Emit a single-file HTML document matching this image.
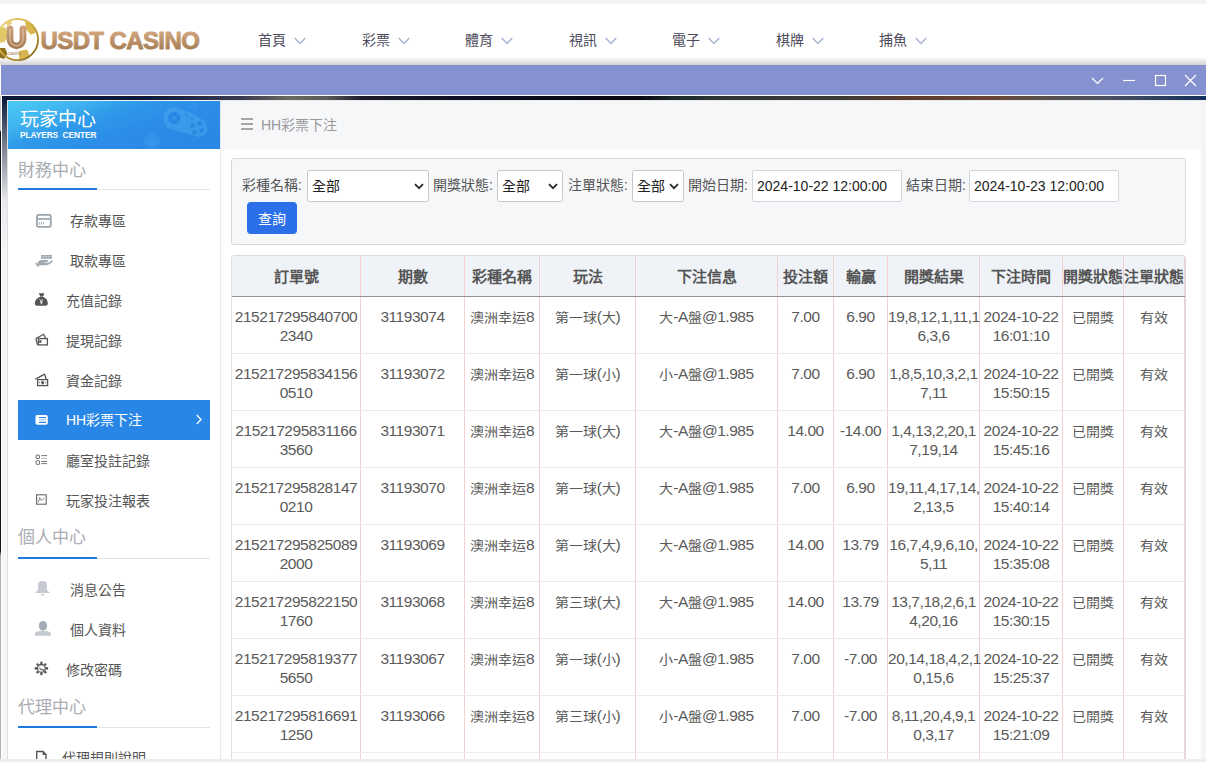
<!DOCTYPE html>
<html lang="zh-TW"><head><meta charset="utf-8">
<style>
*{box-sizing:border-box;margin:0;padding:0}
html,body{width:1206px;height:762px;overflow:hidden;background:#fff;font-family:"Liberation Sans",sans-serif;}
.abs{position:absolute}
#topstrip{left:0;top:0;width:1206px;height:4px;background:#f3f3f3}
#hdrshadow{left:0;top:57px;width:1206px;height:8px;background:linear-gradient(#fff,#d2d2d2)}

.nav{top:30px;height:20px;font-size:14px;line-height:20px;color:#4d4a5c;white-space:nowrap}
.nav svg{position:absolute;left:36px;top:7px}
#winbar{left:1px;top:65px;width:1205px;height:30px;background:#8691cf}
#winline{left:1px;top:95px;width:1205px;height:1px;background:#fff}
#band{left:1px;top:96px;width:1205px;height:4px;background:linear-gradient(90deg,#0a1838 0%,#0f1a3a 12%,#3a3a50 20%,#6a6a60 24%,#5a5a58 27%,#1c1c2c 30%,#0a0c20 40%,#080810 53%,#1a2a2a 56%,#2f3634 60%,#3d3a36 70%,#5a3a2c 75%,#6a4432 82%,#5a5048 86%,#4a5060 92%,#12305a 100%)}
#leftedge{left:0;top:96px;width:1px;height:666px;background:linear-gradient(#c8c8c8 0px,#c8c8c8 34px,#101018 36px,#1a1020 455px,#b0b0b0 460px,#b0b0b0 100%)}
#leftwhite{left:1px;top:95px;width:1px;height:667px;background:#fff}
#leftpad{left:2px;top:96px;width:5px;height:666px;background:linear-gradient(#0a1634 0px,#1a2a48 10px,#7a8090 50px,#9096a4 62px,#e8e9ec 105px,#f6f6f6 160px,#f6f6f6 100%)}
#sidebar{left:7px;top:100px;width:214px;height:662px;background:#fff;border-left:1px solid #e0e0e0;border-right:1px solid #e6e9ee;border-top:1px solid #f2f2f2}
#pc{left:8px;top:101px;width:212px;height:48px;background:linear-gradient(160deg,#4ccbf3 0%,#3fb4ef 22%,#2f9aea 38%,#2b8de7 60%,#2a86e4 100%);overflow:hidden}
#pc .t1{position:absolute;left:12px;top:8px;font-size:19px;line-height:22px;color:#fff}
#pc .t2{position:absolute;left:12px;top:29px;font-size:8.4px;line-height:10px;color:#fff;letter-spacing:-0.1px;font-weight:bold}
.sect{left:18px;font-size:17px;line-height:20px;color:#a9adb3}
.sline{left:18px;width:192px;height:1px;background:#e2e2e2}
.sblue{left:18px;width:79px;height:2px;background:#1f7ae0}
.item{left:18px;width:192px;height:40px;font-size:14px;line-height:40px;color:#555}
.item .ic{position:absolute;left:17px;top:0;height:40px;display:flex;align-items:center}
.item .ics{position:absolute;left:0;top:0}
.item .tx{position:absolute;left:48px;top:1px}
.item.act{background:#2887e6;color:#fff}
.item.act .tx{top:0}
#main{left:221px;top:100px;width:980px;height:662px;background:#fff}
#mainhdr{left:221px;top:100px;width:980px;height:49px;background:#f6f7f9;border-top:1px solid #e8e8e8}
#rightpad{left:1201px;top:100px;width:5px;height:662px;background:#f4f4f4}
#bottomstrip{left:0;top:759px;width:1206px;height:3px;background:#eeeeee}
#crumb{left:241px;top:115px;font-size:14px;line-height:20px;color:#999}
#filter{left:231px;top:158px;width:955px;height:87px;background:#f6f7f9;border:1px solid #d2d9de;border-radius:3px}
.lbl{top:175px;font-size:14px;line-height:20px;color:#555}
.sel{top:170px;height:32px;background:#fff;border:1px solid #c6c7c9;border-radius:2.5px;font-size:14px;line-height:30px;color:#222;padding-left:4px}
.sel svg{position:absolute;right:4px;top:12px}
.inp{top:170px;height:32px;background:#fff;border:1px solid #d3d6da;border-radius:2px;font-size:14px;line-height:30px;color:#222;padding-left:4px}
#btn{left:247px;top:202px;width:50px;height:32px;background:#2b70e8;border-radius:4px;color:#fff;font-size:14px;line-height:34px;text-align:center}
#tbl{left:231px;top:255px;width:955px;height:507px;border-left:1px solid #dcdfe3;border-right:1px solid #d6dce2;border-top:1px solid #d8dce0;border-top-left-radius:4px;border-top-right-radius:4px;overflow:hidden}
.row{position:absolute;left:0;display:flex}
.c{border-right:1px solid #f5cfd2;text-align:center;flex:none;overflow:visible;white-space:nowrap}
.hd{top:0;height:41px;background:#eff3f7;border-bottom:1px solid #9b8f91}
.hd .c{height:40px;font-size:15px;line-height:42px;font-weight:bold;color:#555}
.br{height:57px;border-bottom:1px solid #ebebeb}
.br .c{height:56px;font-size:15.5px;line-height:19px;color:#5a5a5a;padding-top:10px;letter-spacing:-0.45px}
.k{font-size:14px;letter-spacing:0;display:inline-block;transform:scaleY(0.93);transform-origin:50% 70%}
</style></head><body>
<div id="topstrip" class="abs"></div>
<div id="hdrshadow" class="abs"></div>
<svg id="logo" class="abs" style="left:0;top:0" width="210" height="64" viewBox="0 0 210 64">
  <defs>
    <linearGradient id="gold" x1="0" y1="0" x2="1" y2="1"><stop offset="0" stop-color="#f0d77a"/><stop offset="0.45" stop-color="#d4b04a"/><stop offset="1" stop-color="#7a5a10"/></linearGradient>
    <linearGradient id="ug" gradientUnits="userSpaceOnUse" x1="0" y1="25" x2="0" y2="49"><stop offset="0" stop-color="#d0a47c"/><stop offset="1" stop-color="#a57a52"/></linearGradient>
    <linearGradient id="tg" x1="0" y1="0" x2="0" y2="1"><stop offset="0" stop-color="#dcb088"/><stop offset="1" stop-color="#9c754c"/></linearGradient>
  </defs>
  <circle cx="17.5" cy="39.6" r="21.2" fill="#fff"/>
  <path d="M25 21.5 L33 24 L36.5 32 L31 35 L26 29Z" fill="#d9b84e"/>
  <path d="M-2 28 L5 27 L8.5 35 L4.5 42 L-2 43Z" fill="#e2c766"/>
  <path d="M-2 48 L5 48 L7.5 54 L4 59 L-2 57Z" fill="#8f701c"/>
  <path d="M19 51 L27 49.5 L29.5 55 L25 59.5 L19 59Z" fill="#d6b450"/>
  <path d="M6 22 L11 20 L12 24 L7 26Z" fill="#e6cf7a"/>
  <circle cx="17.5" cy="39.6" r="20.6" fill="none" stroke="url(#gold)" stroke-width="1.8"/>
  <path d="M10 29 V39.3 A6.5 6.5 0 0 0 23 39.3 V29" fill="none" stroke="url(#ug)" stroke-width="6.8" stroke-linecap="round"/>
  <path d="M10 29.5 V39.3 A6.5 6.5 0 0 0 23 39.3 V29.5" fill="none" stroke="#fff" stroke-width="0.7" stroke-linecap="round" opacity="0.75"/>
  <text x="8" y="54.5" font-family="Liberation Sans" font-size="4.5" fill="#a07a50">casino</text>
  <text x="40.5" y="49" font-family="Liberation Sans" font-weight="bold" font-size="24" letter-spacing="-0.6" fill="url(#tg)" stroke="url(#tg)" stroke-width="0.9" stroke-linejoin="round">USDT CASINO</text>
</svg>

<div class="abs nav" style="left:258px">首頁<svg width="12" height="8" viewBox="0 0 12 8"><path d="M0.7 1 L6 6.5 L11.3 1" fill="none" stroke="#a8b2d2" stroke-width="1.5"/></svg></div>
<div class="abs nav" style="left:362px">彩票<svg width="12" height="8" viewBox="0 0 12 8"><path d="M0.7 1 L6 6.5 L11.3 1" fill="none" stroke="#a8b2d2" stroke-width="1.5"/></svg></div>
<div class="abs nav" style="left:465px">體育<svg width="12" height="8" viewBox="0 0 12 8"><path d="M0.7 1 L6 6.5 L11.3 1" fill="none" stroke="#a8b2d2" stroke-width="1.5"/></svg></div>
<div class="abs nav" style="left:569px">視訊<svg width="12" height="8" viewBox="0 0 12 8"><path d="M0.7 1 L6 6.5 L11.3 1" fill="none" stroke="#a8b2d2" stroke-width="1.5"/></svg></div>
<div class="abs nav" style="left:672px">電子<svg width="12" height="8" viewBox="0 0 12 8"><path d="M0.7 1 L6 6.5 L11.3 1" fill="none" stroke="#a8b2d2" stroke-width="1.5"/></svg></div>
<div class="abs nav" style="left:776px">棋牌<svg width="12" height="8" viewBox="0 0 12 8"><path d="M0.7 1 L6 6.5 L11.3 1" fill="none" stroke="#a8b2d2" stroke-width="1.5"/></svg></div>
<div class="abs nav" style="left:879px">捕魚<svg width="12" height="8" viewBox="0 0 12 8"><path d="M0.7 1 L6 6.5 L11.3 1" fill="none" stroke="#a8b2d2" stroke-width="1.5"/></svg></div>

<div id="winbar" class="abs"></div>
<svg class="abs" style="left:1080px;top:65px" width="126" height="30" viewBox="0 0 126 30">
  <path d="M12 13 L17.5 18.5 L23 13" fill="none" stroke="#fff" stroke-width="1.2"/>
  <path d="M43 15.5 H55" stroke="#fff" stroke-width="1.2"/>
  <rect x="75.5" y="10.5" width="10" height="10" fill="none" stroke="#fff" stroke-width="1.2"/>
  <path d="M105 10 L116 21 M116 10 L105 21" stroke="#fff" stroke-width="1.2"/>
</svg>
<div id="winline" class="abs"></div>
<div id="band" class="abs"></div>
<div id="leftedge" class="abs"></div>
<div id="leftpad" class="abs"></div><div id="leftwhite" class="abs"></div>
<div id="rightpad" class="abs"></div>

<div id="sidebar" class="abs"></div>
<div id="pc" class="abs">
  <svg style="position:absolute;left:124px;top:-1px" width="88" height="49" viewBox="0 0 88 49">
    <g fill="#48a6ee" opacity="0.55">
      <circle cx="42.5" cy="18" r="11"/>
      <circle cx="67" cy="28.5" r="8.5"/>
      <path d="M38 7.5 L58 12 L74 22 L71 36 L60 35 L35 28Z"/>
    </g>
    <circle cx="42.2" cy="18" r="6" fill="#1f7ee0" opacity="0.75"/>
    <path d="M39 15 L45.4 21 M45.4 15 L39 21" stroke="#3d9cec" stroke-width="1.2" opacity="0.7"/>
    <path d="M53 14 L56 15.8 M58 17.5 L61 19.3" stroke="#1f7ee0" stroke-width="1.5" opacity="0.7"/>
    <g fill="#1f7ee0" opacity="0.7"><circle cx="60.5" cy="25.5" r="2.2"/><circle cx="68" cy="23.5" r="2.2"/><circle cx="62.5" cy="32.5" r="2.2"/><circle cx="69.5" cy="30.5" r="2.2"/></g>
    <path d="M58 9 C58 6 61 7 63 8 C65 7 64 5 62 2" fill="none" stroke="#48a6ee" stroke-width="1" opacity="0.6"/>
    <circle cx="20" cy="41" r="8.5" fill="#45a2ec" opacity="0.25"/>
    <circle cx="20" cy="42" r="4.5" fill="#45a2ec" opacity="0.3"/>
  </svg>
  <div class="t1">玩家中心</div>
  <div class="t2">PLAYERS&nbsp;&nbsp;CENTER</div>
</div>

<div class="abs sect" style="top:160.5px">財務中心</div>
<div class="abs sline" style="top:189px"></div>
<div class="abs sblue" style="top:188px"></div>

<div class="abs item" style="top:200px"><svg class="ics" width="40" height="40" viewBox="0 0 40 40"><rect x="19" y="14.9" width="13.8" height="12" rx="1.6" fill="none" stroke="#9aa4ad" stroke-width="1.8"/><path d="M19 18.9 H32.8" stroke="#9aa4ad" stroke-width="1.7"/><path d="M21.4 22.2 V24.6 M23.4 22.2 V24.6 M25.5 22.2 V24.6" stroke="#9aa4ad" stroke-width="0.9"/></svg><span class="tx" style="left:52px">存款專區</span></div>
<div class="abs item" style="top:240px"><svg class="ics" width="40" height="40" viewBox="0 0 40 40"><rect x="23" y="15" width="11" height="3.8" fill="#a0aab3"/><path d="M23.5 16.6 H33.5" stroke="#c0c7cd" stroke-width="0.9"/><path d="M17.2 23.6 L18.6 22.6 L21.2 26 L19.8 27Z" fill="#a0aab3"/><path d="M19.5 22.6 C20.5 21 22 20.1 24 20.1 L29.3 20.1 C30.4 20.3 30.3 21.9 29.2 22.1 L25.8 22.3 C27 23 29 23 31 22.6 L34 20.3 C34.9 19.9 35.3 20.9 34.7 21.6 C32.5 24.2 30.2 25.2 27 25.2 L22.6 25.2 C21.6 25.2 21 25.6 20.6 25.9Z" fill="#a0aab3"/></svg><span class="tx" style="left:52px">取款專區</span></div>
<div class="abs item" style="top:280px"><svg class="ics" width="40" height="40" viewBox="0 0 40 40"><path d="M20.8 13.2 L26.5 13.2 L25 16.6 L22.2 16.6Z" fill="#555"/><path d="M22.2 16.8 C18.6 18 16.8 20.8 16.8 23.6 C16.8 25.1 17.6 25.7 19.2 25.7 L27.4 25.7 C29 25.7 29.8 25.1 29.8 23.6 C29.8 20.8 28.4 18 24.9 16.8Z" fill="#555"/><path d="M21.7 19.3 L23.3 21.4 L24.9 19.3 M23.3 21.4 V24.2 M21.9 22.2 H24.7" fill="none" stroke="#fff" stroke-width="0.9"/></svg><span class="tx">充值記錄</span></div>
<div class="abs item" style="top:320px"><svg class="ics" width="40" height="40" viewBox="0 0 40 40"><path d="M17.8 18.6 L25.6 14.3 L27.6 18.2" fill="none" stroke="#555" stroke-width="1.3"/><path d="M17.8 18.6 L19.6 25" fill="none" stroke="#555" stroke-width="1.2"/><rect x="20.4" y="18.6" width="9" height="6.3" fill="none" stroke="#555" stroke-width="1.3"/><rect x="21.2" y="20.2" width="2.2" height="2.6" fill="#555"/></svg><span class="tx">提現記錄</span></div>
<div class="abs item" style="top:360px"><svg class="ics" width="40" height="40" viewBox="0 0 40 40"><path d="M17.2 19.2 L26.5 14.1 L28.2 19" fill="none" stroke="#555" stroke-width="1.3"/><path d="M19.5 18 L25 15.2" stroke="#555" stroke-width="0.9"/><rect x="19.6" y="19.6" width="10" height="6" fill="none" stroke="#555" stroke-width="1.3"/><ellipse cx="24.6" cy="22.6" rx="1.4" ry="1.9" fill="#555"/><circle cx="21.6" cy="22.6" r="0.6" fill="#555"/><circle cx="27.6" cy="22.6" r="0.6" fill="#555"/></svg><span class="tx">資金記錄</span></div>
<div class="abs item act" style="top:400px"><svg class="ics" width="40" height="40" viewBox="0 0 40 40"><rect x="17.5" y="15" width="12.3" height="9.8" rx="1.8" fill="#fff"/><path d="M21 17.5 H28 M21 22.4 H28" stroke="#2a85e4" stroke-width="1.1"/><path d="M21 19.8 H28" stroke="#8ec0f2" stroke-width="1"/></svg><span class="tx">HH彩票下注</span><svg style="position:absolute;left:178px;top:14px" width="6" height="11" viewBox="0 0 6 11"><path d="M0.8 1 L5 5.5 L0.8 10" fill="none" stroke="#fff" stroke-width="1.3"/></svg></div>
<div class="abs item" style="top:440px"><svg class="ics" width="40" height="40" viewBox="0 0 40 40"><rect x="18.1" y="15.2" width="3.4" height="3.3" rx="0.6" fill="none" stroke="#666" stroke-width="1"/><rect x="18.1" y="20.7" width="3.4" height="3.6" rx="0.6" fill="none" stroke="#666" stroke-width="1"/><path d="M23.3 15.6 H29.1 M23.3 21.5 H29.1 M23.3 23.6 H29.1" stroke="#666" stroke-width="0.9"/><path d="M23.3 18.3 H29.1" stroke="#aaa" stroke-width="0.9"/></svg><span class="tx">廳室投註記錄</span></div>
<div class="abs item" style="top:480px"><svg class="ics" width="40" height="40" viewBox="0 0 40 40"><rect x="18.6" y="14.8" width="9.6" height="9.4" fill="none" stroke="#666" stroke-width="1.1"/><path d="M20.3 22.3 L21.6 17.6 L23.4 20.6 L26.4 18" fill="none" stroke="#777" stroke-width="0.9"/></svg><span class="tx">玩家投注報表</span></div>

<div class="abs sect" style="top:527.5px">個人中心</div>
<div class="abs sline" style="top:558px"></div>
<div class="abs sblue" style="top:557px"></div>
<div class="abs item" style="top:569px"><svg class="ics" width="40" height="40" viewBox="0 0 40 40"><path d="M20.2 23.7 V15 C20.2 13 21.5 12 24.5 12 C27.5 12 28.8 13 28.8 15 V23.7Z" fill="#c5cad1"/><path d="M17 23.9 L20.5 20.5 H28.5 L32 23.9Z" fill="#c5cad1"/><rect x="22.9" y="25" width="3.1" height="1.4" fill="#c5cad1"/></svg><span class="tx" style="left:52px">消息公告</span></div>
<div class="abs item" style="top:609px"><svg class="ics" width="40" height="40" viewBox="0 0 40 40"><ellipse cx="25" cy="16.8" rx="4.1" ry="4.9" fill="#a2abb5"/><path d="M17 26.7 V24.6 C17 23.2 20 22.1 22.5 22.1 H27.5 C30 22.1 32.8 23.2 32.8 24.6 V26.7Z" fill="#c5cad1"/></svg><span class="tx" style="left:52px">個人資料</span></div>
<div class="abs item" style="top:649px"><svg class="ics" width="40" height="40" viewBox="0 0 40 40"><g fill="#555"><circle cx="23.4" cy="13.9" r="1.3"/><circle cx="23.4" cy="24.9" r="1.3"/><circle cx="17.9" cy="19.4" r="1.3"/><circle cx="28.9" cy="19.4" r="1.3"/><circle cx="19.5" cy="15.5" r="1.2"/><circle cx="27.3" cy="15.5" r="1.2"/><circle cx="19.5" cy="23.3" r="1.2"/><circle cx="27.3" cy="23.3" r="1.2"/></g><circle cx="23.4" cy="19.4" r="3.9" fill="none" stroke="#555" stroke-width="1.3"/><path d="M21.6 18.6 C22 20.4 23.5 21 25 20.6 L26.6 22.4" fill="none" stroke="#555" stroke-width="1.1"/></svg><span class="tx">修改密碼</span></div>

<div class="abs sect" style="top:698px">代理中心</div>
<div class="abs sline" style="top:727px"></div>
<div class="abs sblue" style="top:726px"></div>
<div class="abs item" style="top:737px"><svg class="ics" width="40" height="40" viewBox="0 0 40 40"><path d="M18.7 27 V14.5 H25 L28 17.6 V27" fill="none" stroke="#555" stroke-width="1.4"/><path d="M24.6 14.5 L24.6 18 L28 18Z" fill="#555"/></svg><span class="tx" style="left:44px">代理規則說明</span></div>

<div id="mainhdr" class="abs"></div>
<svg class="abs" style="left:241px;top:118px" width="12" height="12" viewBox="0 0 12 12"><path d="M0 1 H12 M0 6 H12 M0 11 H12" stroke="#8a8a8a" stroke-width="1.6"/></svg>
<div id="crumb" class="abs" style="left:261px">HH彩票下注</div>

<div id="filter" class="abs"></div>
<div class="abs lbl" style="left:242px">彩種名稱:</div>
<div class="abs sel" style="left:307px;width:122px">全部<svg width="10" height="7" viewBox="0 0 10 7"><path d="M1 1.2 L5 5.2 L9 1.2" fill="none" stroke="#2a2a2a" stroke-width="1.8"/></svg></div>
<div class="abs lbl" style="left:433px">開獎狀態:</div>
<div class="abs sel" style="left:497px;width:66px">全部<svg width="10" height="7" viewBox="0 0 10 7"><path d="M1 1.2 L5 5.2 L9 1.2" fill="none" stroke="#2a2a2a" stroke-width="1.8"/></svg></div>
<div class="abs lbl" style="left:568px">注單狀態:</div>
<div class="abs sel" style="left:632px;width:52px">全部<svg width="10" height="7" viewBox="0 0 10 7"><path d="M1 1.2 L5 5.2 L9 1.2" fill="none" stroke="#2a2a2a" stroke-width="1.8"/></svg></div>
<div class="abs lbl" style="left:688px">開始日期:</div>
<div class="abs inp" style="left:752px;width:150px">2024-10-22 12:00:00</div>
<div class="abs lbl" style="left:906px">結束日期:</div>
<div class="abs inp" style="left:969px;width:150px">2024-10-23 12:00:00</div>
<div id="btn" class="abs">查詢</div>

<div id="tbl" class="abs">
<div class="row hd"><div class="c" style="width:129px">訂單號</div><div class="c" style="width:104px">期數</div><div class="c" style="width:75px">彩種名稱</div><div class="c" style="width:96px">玩法</div><div class="c" style="width:142px">下注信息</div><div class="c" style="width:56px">投注額</div><div class="c" style="width:54px">輸贏</div><div class="c" style="width:92px">開獎結果</div><div class="c" style="width:83px">下注時間</div><div class="c" style="width:61px">開獎狀態</div><div class="c" style="width:61px">注單狀態</div></div>
<div class="row br" style="top:41px"><div class="c" style="width:129px">215217295840700<br>2340</div><div class="c" style="width:104px">31193074</div><div class="c" style="width:75px"><span class="k">澳洲幸运</span>8</div><div class="c" style="width:96px"><span class="k">第一球</span>(<span class="k">大</span>)</div><div class="c" style="width:142px"><span class="k">大</span>-A<span class="k">盤</span>@1.985</div><div class="c" style="width:56px">7.00</div><div class="c" style="width:54px">6.90</div><div class="c" style="width:92px">19,8,12,1,11,1<br>6,3,6</div><div class="c" style="width:83px">2024-10-22<br>16:01:10</div><div class="c" style="width:61px"><span class="k">已開獎</span></div><div class="c" style="width:61px"><span class="k">有效</span></div></div>
<div class="row br" style="top:98px"><div class="c" style="width:129px">215217295834156<br>0510</div><div class="c" style="width:104px">31193072</div><div class="c" style="width:75px"><span class="k">澳洲幸运</span>8</div><div class="c" style="width:96px"><span class="k">第一球</span>(<span class="k">小</span>)</div><div class="c" style="width:142px"><span class="k">小</span>-A<span class="k">盤</span>@1.985</div><div class="c" style="width:56px">7.00</div><div class="c" style="width:54px">6.90</div><div class="c" style="width:92px">1,8,5,10,3,2,1<br>7,11</div><div class="c" style="width:83px">2024-10-22<br>15:50:15</div><div class="c" style="width:61px"><span class="k">已開獎</span></div><div class="c" style="width:61px"><span class="k">有效</span></div></div>
<div class="row br" style="top:155px"><div class="c" style="width:129px">215217295831166<br>3560</div><div class="c" style="width:104px">31193071</div><div class="c" style="width:75px"><span class="k">澳洲幸运</span>8</div><div class="c" style="width:96px"><span class="k">第一球</span>(<span class="k">大</span>)</div><div class="c" style="width:142px"><span class="k">大</span>-A<span class="k">盤</span>@1.985</div><div class="c" style="width:56px">14.00</div><div class="c" style="width:54px">-14.00</div><div class="c" style="width:92px">1,4,13,2,20,1<br>7,19,14</div><div class="c" style="width:83px">2024-10-22<br>15:45:16</div><div class="c" style="width:61px"><span class="k">已開獎</span></div><div class="c" style="width:61px"><span class="k">有效</span></div></div>
<div class="row br" style="top:212px"><div class="c" style="width:129px">215217295828147<br>0210</div><div class="c" style="width:104px">31193070</div><div class="c" style="width:75px"><span class="k">澳洲幸运</span>8</div><div class="c" style="width:96px"><span class="k">第一球</span>(<span class="k">大</span>)</div><div class="c" style="width:142px"><span class="k">大</span>-A<span class="k">盤</span>@1.985</div><div class="c" style="width:56px">7.00</div><div class="c" style="width:54px">6.90</div><div class="c" style="width:92px">19,11,4,17,14,<br>2,13,5</div><div class="c" style="width:83px">2024-10-22<br>15:40:14</div><div class="c" style="width:61px"><span class="k">已開獎</span></div><div class="c" style="width:61px"><span class="k">有效</span></div></div>
<div class="row br" style="top:269px"><div class="c" style="width:129px">215217295825089<br>2000</div><div class="c" style="width:104px">31193069</div><div class="c" style="width:75px"><span class="k">澳洲幸运</span>8</div><div class="c" style="width:96px"><span class="k">第一球</span>(<span class="k">大</span>)</div><div class="c" style="width:142px"><span class="k">大</span>-A<span class="k">盤</span>@1.985</div><div class="c" style="width:56px">14.00</div><div class="c" style="width:54px">13.79</div><div class="c" style="width:92px">16,7,4,9,6,10,<br>5,11</div><div class="c" style="width:83px">2024-10-22<br>15:35:08</div><div class="c" style="width:61px"><span class="k">已開獎</span></div><div class="c" style="width:61px"><span class="k">有效</span></div></div>
<div class="row br" style="top:326px"><div class="c" style="width:129px">215217295822150<br>1760</div><div class="c" style="width:104px">31193068</div><div class="c" style="width:75px"><span class="k">澳洲幸运</span>8</div><div class="c" style="width:96px"><span class="k">第三球</span>(<span class="k">大</span>)</div><div class="c" style="width:142px"><span class="k">大</span>-A<span class="k">盤</span>@1.985</div><div class="c" style="width:56px">14.00</div><div class="c" style="width:54px">13.79</div><div class="c" style="width:92px">13,7,18,2,6,1<br>4,20,16</div><div class="c" style="width:83px">2024-10-22<br>15:30:15</div><div class="c" style="width:61px"><span class="k">已開獎</span></div><div class="c" style="width:61px"><span class="k">有效</span></div></div>
<div class="row br" style="top:383px"><div class="c" style="width:129px">215217295819377<br>5650</div><div class="c" style="width:104px">31193067</div><div class="c" style="width:75px"><span class="k">澳洲幸运</span>8</div><div class="c" style="width:96px"><span class="k">第一球</span>(<span class="k">小</span>)</div><div class="c" style="width:142px"><span class="k">小</span>-A<span class="k">盤</span>@1.985</div><div class="c" style="width:56px">7.00</div><div class="c" style="width:54px">-7.00</div><div class="c" style="width:92px">20,14,18,4,2,1<br>0,15,6</div><div class="c" style="width:83px">2024-10-22<br>15:25:37</div><div class="c" style="width:61px"><span class="k">已開獎</span></div><div class="c" style="width:61px"><span class="k">有效</span></div></div>
<div class="row br" style="top:440px"><div class="c" style="width:129px">215217295816691<br>1250</div><div class="c" style="width:104px">31193066</div><div class="c" style="width:75px"><span class="k">澳洲幸运</span>8</div><div class="c" style="width:96px"><span class="k">第三球</span>(<span class="k">小</span>)</div><div class="c" style="width:142px"><span class="k">小</span>-A<span class="k">盤</span>@1.985</div><div class="c" style="width:56px">7.00</div><div class="c" style="width:54px">-7.00</div><div class="c" style="width:92px">8,11,20,4,9,1<br>0,3,17</div><div class="c" style="width:83px">2024-10-22<br>15:21:09</div><div class="c" style="width:61px"><span class="k">已開獎</span></div><div class="c" style="width:61px"><span class="k">有效</span></div></div>
<div class="row br" style="top:497px"><div class="c" style="width:129px"></div><div class="c" style="width:104px"></div><div class="c" style="width:75px"></div><div class="c" style="width:96px"></div><div class="c" style="width:142px"></div><div class="c" style="width:56px"></div><div class="c" style="width:54px"></div><div class="c" style="width:92px"></div><div class="c" style="width:83px"></div><div class="c" style="width:61px"></div><div class="c" style="width:61px"></div></div>
</div>
<div id="bottomstrip" class="abs"></div>
</body></html>
